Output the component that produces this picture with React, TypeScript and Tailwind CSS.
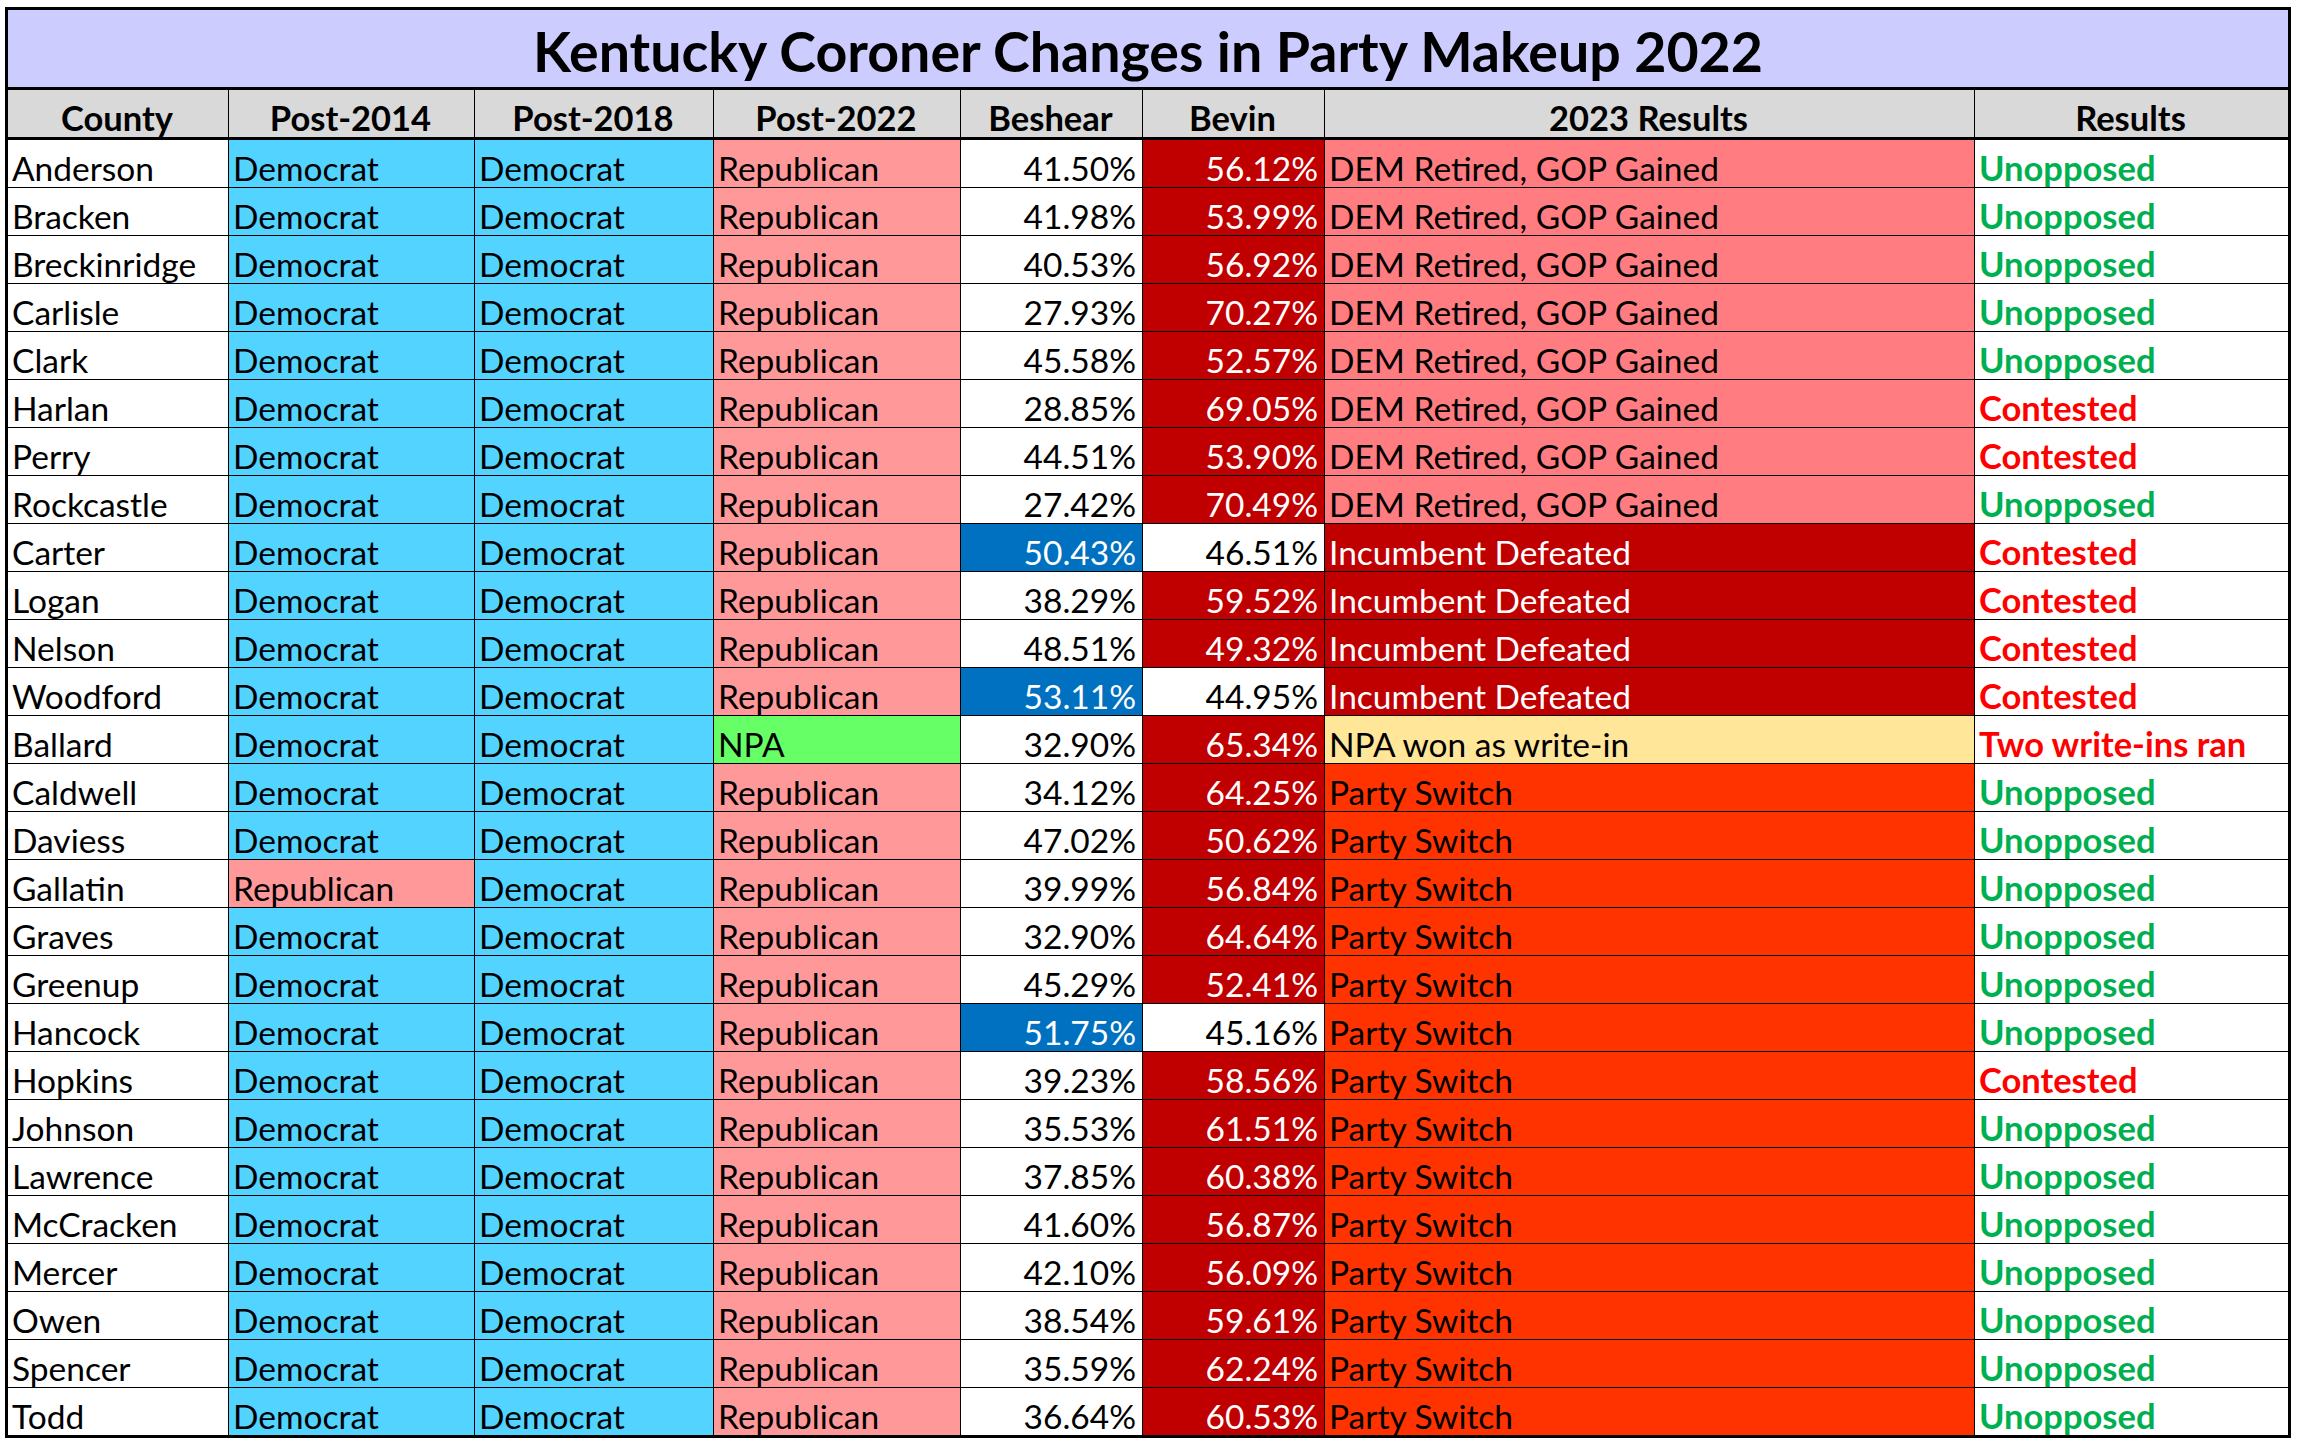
type Row = {
  county: string;
  p14: string;
  p18: string;
  p22: string;
  beshear: string;
  bevin: string;
  result: string;
  outcome: string;
};

const data: Row[] = [
  { county: 'Anderson', p14: 'D', p18: 'D', p22: 'R', beshear: '41.50%', bevin: '56.12%', result: 'DR', outcome: 'Unopposed' },
  { county: 'Bracken', p14: 'D', p18: 'D', p22: 'R', beshear: '41.98%', bevin: '53.99%', result: 'DR', outcome: 'Unopposed' },
  { county: 'Breckinridge', p14: 'D', p18: 'D', p22: 'R', beshear: '40.53%', bevin: '56.92%', result: 'DR', outcome: 'Unopposed' },
  { county: 'Carlisle', p14: 'D', p18: 'D', p22: 'R', beshear: '27.93%', bevin: '70.27%', result: 'DR', outcome: 'Unopposed' },
  { county: 'Clark', p14: 'D', p18: 'D', p22: 'R', beshear: '45.58%', bevin: '52.57%', result: 'DR', outcome: 'Unopposed' },
  { county: 'Harlan', p14: 'D', p18: 'D', p22: 'R', beshear: '28.85%', bevin: '69.05%', result: 'DR', outcome: 'Contested' },
  { county: 'Perry', p14: 'D', p18: 'D', p22: 'R', beshear: '44.51%', bevin: '53.90%', result: 'DR', outcome: 'Contested' },
  { county: 'Rockcastle', p14: 'D', p18: 'D', p22: 'R', beshear: '27.42%', bevin: '70.49%', result: 'DR', outcome: 'Unopposed' },
  { county: 'Carter', p14: 'D', p18: 'D', p22: 'R', beshear: '50.43%', bevin: '46.51%', result: 'ID', outcome: 'Contested' },
  { county: 'Logan', p14: 'D', p18: 'D', p22: 'R', beshear: '38.29%', bevin: '59.52%', result: 'ID', outcome: 'Contested' },
  { county: 'Nelson', p14: 'D', p18: 'D', p22: 'R', beshear: '48.51%', bevin: '49.32%', result: 'ID', outcome: 'Contested' },
  { county: 'Woodford', p14: 'D', p18: 'D', p22: 'R', beshear: '53.11%', bevin: '44.95%', result: 'ID', outcome: 'Contested' },
  { county: 'Ballard', p14: 'D', p18: 'D', p22: 'N', beshear: '32.90%', bevin: '65.34%', result: 'NW', outcome: 'Two write-ins ran' },
  { county: 'Caldwell', p14: 'D', p18: 'D', p22: 'R', beshear: '34.12%', bevin: '64.25%', result: 'PS', outcome: 'Unopposed' },
  { county: 'Daviess', p14: 'D', p18: 'D', p22: 'R', beshear: '47.02%', bevin: '50.62%', result: 'PS', outcome: 'Unopposed' },
  { county: 'Gallatin', p14: 'R', p18: 'D', p22: 'R', beshear: '39.99%', bevin: '56.84%', result: 'PS', outcome: 'Unopposed' },
  { county: 'Graves', p14: 'D', p18: 'D', p22: 'R', beshear: '32.90%', bevin: '64.64%', result: 'PS', outcome: 'Unopposed' },
  { county: 'Greenup', p14: 'D', p18: 'D', p22: 'R', beshear: '45.29%', bevin: '52.41%', result: 'PS', outcome: 'Unopposed' },
  { county: 'Hancock', p14: 'D', p18: 'D', p22: 'R', beshear: '51.75%', bevin: '45.16%', result: 'PS', outcome: 'Unopposed' },
  { county: 'Hopkins', p14: 'D', p18: 'D', p22: 'R', beshear: '39.23%', bevin: '58.56%', result: 'PS', outcome: 'Contested' },
  { county: 'Johnson', p14: 'D', p18: 'D', p22: 'R', beshear: '35.53%', bevin: '61.51%', result: 'PS', outcome: 'Unopposed' },
  { county: 'Lawrence', p14: 'D', p18: 'D', p22: 'R', beshear: '37.85%', bevin: '60.38%', result: 'PS', outcome: 'Unopposed' },
  { county: 'McCracken', p14: 'D', p18: 'D', p22: 'R', beshear: '41.60%', bevin: '56.87%', result: 'PS', outcome: 'Unopposed' },
  { county: 'Mercer', p14: 'D', p18: 'D', p22: 'R', beshear: '42.10%', bevin: '56.09%', result: 'PS', outcome: 'Unopposed' },
  { county: 'Owen', p14: 'D', p18: 'D', p22: 'R', beshear: '38.54%', bevin: '59.61%', result: 'PS', outcome: 'Unopposed' },
  { county: 'Spencer', p14: 'D', p18: 'D', p22: 'R', beshear: '35.59%', bevin: '62.24%', result: 'PS', outcome: 'Unopposed' },
  { county: 'Todd', p14: 'D', p18: 'D', p22: 'R', beshear: '36.64%', bevin: '60.53%', result: 'PS', outcome: 'Unopposed' },
];

const cols = 'grid grid-cols-[220px_245px_238px_246px_181px_181px_649px_313px] gap-x-px bg-black';
const cell = 'flex h-[47px] items-center pl-[4px] pr-[6px] pt-[9px] whitespace-nowrap';

const party = (p: string) => {
  if (p === 'D') return { label: 'Democrat', bg: 'bg-[#53D3FF]' };
  if (p === 'N') return { label: 'NPA', bg: 'bg-[#66FF66]' };
  return { label: 'Republican', bg: 'bg-[#FF9999]' };
};

const results: Record<string, { label: string; cls: string }> = {
  DR: { label: 'DEM Retired, GOP Gained', cls: 'bg-[#FF7C80] text-black' },
  ID: { label: 'Incumbent Defeated', cls: 'bg-[#C00000] text-white' },
  NW: { label: 'NPA won as write-in', cls: 'bg-[#FFE699] text-black' },
  PS: { label: 'Party Switch', cls: 'bg-[#FF3300] text-black' },
};

const Header = ({ children }: { children: string }) => (
  <div className={`${cell} justify-center bg-[#D9D9D9] text-[34.5px] font-bold`}>{children}</div>
);

const App = () => {
  return (
    <div className="min-h-screen bg-white pl-[5px] pt-[7px] font-['Lato',sans-serif] text-[33.5px] text-black">
      <div className="w-[2286px] border-[3px] border-black">
        <div className="flex h-[80px] items-center justify-center border-b-[3px] border-black bg-[#CCCCFF] pt-[5px] text-[55.5px] font-bold">
          Kentucky Coroner Changes in Party Makeup 2022
        </div>

        <div className={`${cols} border-b-[3px] border-black`}>
          <Header>County</Header>
          <Header>Post-2014</Header>
          <Header>Post-2018</Header>
          <Header>Post-2022</Header>
          <Header>Beshear</Header>
          <Header>Bevin</Header>
          <Header>2023 Results</Header>
          <Header>Results</Header>
        </div>

        <div className={`${cols} gap-y-px`}>
          {data.map((r) => {
            const a = party(r.p14);
            const b = party(r.p18);
            const c = party(r.p22);
            const beshearWon = parseFloat(r.beshear) > parseFloat(r.bevin);
            const res = results[r.result];
            return (
              <div key={r.county} className="contents">
                <div className={`${cell} bg-white`}>{r.county}</div>
                <div className={`${cell} ${a.bg}`}>{a.label}</div>
                <div className={`${cell} ${b.bg}`}>{b.label}</div>
                <div className={`${cell} ${c.bg}`}>{c.label}</div>
                <div
                  className={`${cell} justify-end ${beshearWon ? 'bg-[#0070C0] text-white' : 'bg-white'}`}
                >
                  {r.beshear}
                </div>
                <div
                  className={`${cell} justify-end ${beshearWon ? 'bg-white' : 'bg-[#C00000] text-white'}`}
                >
                  {r.bevin}
                </div>
                <div className={`${cell} ${res.cls}`}>{res.label}</div>
                <div
                  className={`${cell} bg-white text-[34.5px] font-bold ${
                    r.outcome === 'Unopposed' ? 'text-[#00B050]' : 'text-[#FF0000]'
                  }`}
                >
                  {r.outcome}
                </div>
              </div>
            );
          })}
        </div>
      </div>
    </div>
  );
};

export default App;
